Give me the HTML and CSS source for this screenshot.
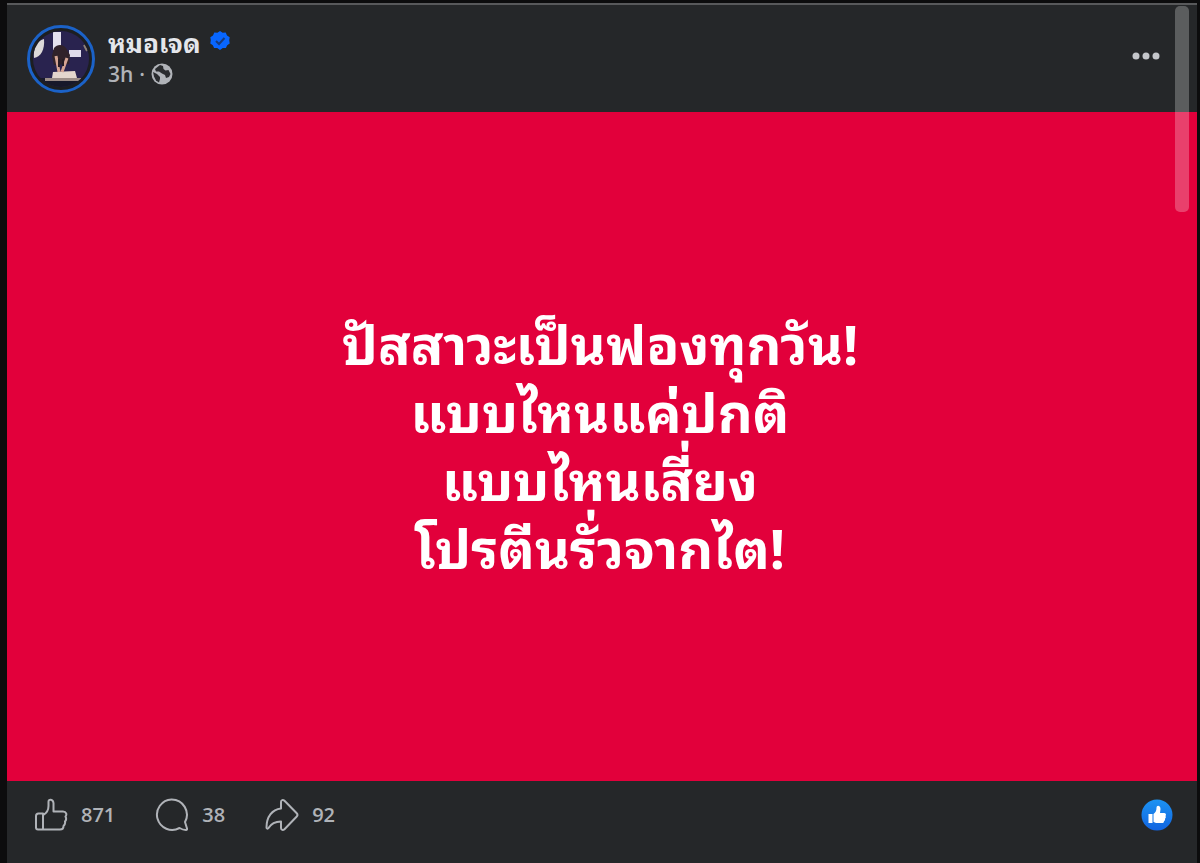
FILE: index.html
```html
<!DOCTYPE html>
<html lang="th">
<head>
  <meta charset="UTF-8" />
  <meta name="viewport" content="width=device-width, initial-scale=1" />
  <title>หมอเจด</title>
  <link rel="stylesheet" href="styles.css">
</head>
<body>
  <article class="post">
    <header class="post-header">
      <a class="avatar" href="#" aria-label="หมอเจด">
        <svg viewBox="0 0 68 68" aria-hidden="true">
          <defs>
            <clipPath id="face"><circle cx="34" cy="34" r="28" /></clipPath>
          </defs>
          <circle cx="34" cy="34" r="32.5" fill="#1c1e22" stroke="#1b62c8" stroke-width="3" />
          <g clip-path="url(#face)">
            <rect width="68" height="68" fill="#29234f" />
            <rect y="53" width="68" height="15" fill="#17182a" />
            <path d="M26 7h8v16l-8 2z" fill="#e4e1ee" />
            <path d="M42 25h12v7H42z" fill="#dedbea" />
            <path d="M17 14c-8 2-11 10-10 19 7-1 11-9 10-19z" fill="#dcd9d8" />
            <path d="M57 20l3 6" stroke="#8f8378" stroke-width="2" />
            <path d="M18 53h36v3H18z" fill="#9b8d87" />
            <path d="M26 47l22-1 2 7H25z" fill="#e3d6cd" />
            <path d="M27 23c3-4 9-4 12 0l4 7-1 9-15 1-2-9z" fill="#30222a" />
            <path d="M29 31l3 16M40 33l-5 14" stroke="#d5a493" stroke-width="3" />
            <path d="M32 34v8M36 34v7" stroke="#271d25" stroke-width="2" />
          </g>
        </svg>
      </a>
      <div class="author">
        <div class="author-line">
          <a class="author-name" href="#">หมอเจด</a>
          <svg class="verified" viewBox="0 0 20 20" aria-hidden="true">
            <path d="M10 0l2.6 1.8 3.1-.2 1.3 2.900 2.700 1.700-.5 3.100.5 3.100-2.500 1.800-1.300 2.900-3.100-.2L10 19l-2.800-2.100-3.100.2-1.300-2.900-2.500-1.800.5-3.100-.5-3.100L3 4.500l1.300-2.900 3.100.2z" fill="#0866ff" />
            <path d="M6 10l3 3 5.500-6" fill="none" stroke="#173a7c" stroke-width="2" />
          </svg>
        </div>
        <div class="meta">
          <a class="time" href="#">3h</a>
          <span>·</span>
          <svg class="globe" viewBox="0 0 22 22" aria-hidden="true">
            <circle cx="11" cy="11" r="10.500" fill="#b0b3b8" />
            <path d="M9 2l3 1 .5 3 2 1.500 3-.5 2 4-1.500 3-3 1-1-3-3-1.500-3-2-3 0-1-2.500z" fill="#292b2e" />
            <path d="M2 9l4 2 3 3 0 2-1 3.500-3-2-2-4z" fill="#292b2e" />
          </svg>
        </div>
      </div>
      <button class="more" type="button" aria-label="More">
        <svg viewBox="0 0 28 8" aria-hidden="true">
          <circle cx="4" cy="4" r="3.500" /><circle cx="14" cy="4" r="3.500" /><circle cx="24" cy="4" r="3.500" />
        </svg>
      </button>
    </header>

    <div class="post-body">
      <p class="message">ปัสสาวะเป็นฟองทุกวัน!<br>แบบไหนแค่ปกติ<br>แบบไหนเสี่ยง<br>โปรตีนรั่วจากไต!</p>
    </div>

    <footer class="post-footer">
      <button class="action" type="button" aria-label="Like 871">
        <svg viewBox="0 0 34 34" aria-hidden="true">
          <path d="M9 15.500H4.500a2.500 2.500 0 0 0-2.500 2.500v11.500a2 2 0 0 0 2 2h5zM9 17c4-2 5.500-5 5.500-9V3.500C14.500 1 19 1 19.500 5v8.500H29c3.500 0 4 3.500 2.500 5 1 2 .5 4-.5 5 .5 2-.5 3.500-1.500 4.500 0 2.500-1.500 3.500-3.500 3.500H9" />
        </svg>
        <span>871</span>
      </button>
      <button class="action" type="button" aria-label="Comment 38">
        <svg viewBox="0 0 34 34" aria-hidden="true">
          <path d="M16.500 1.500a15.200 15.200 0 1 0 8 28.500c2.500 1.500 4.500 2 6.500 2 1 0 1.200-.7 1-1.500l-2-6.500A15.200 15.200 0 0 0 16.500 1.500z" />
        </svg>
        <span>38</span>
      </button>
      <button class="action" type="button" aria-label="Share 92">
        <svg viewBox="0 0 34 34" aria-hidden="true">
          <path d="M16 4c0-2 2-2.500 3.500-1.200L31.500 15c1.300 1.300 1.300 2.500 0 3.800L19.500 31.200C18 32.500 16 32 16 30v-6.500c-6 0-9.500 1.500-12.500 6.500-.8 1.200-2 .7-2-.5C1.500 19 7 11.500 16 10.500z" />
        </svg>
        <span>92</span>
      </button>
      <button class="reactions" type="button" aria-label="Reactions">
        <svg viewBox="0 0 32 32" aria-hidden="true">
          <defs>
            <linearGradient id="like" x1="0" y1="0" x2="0" y2="1">
              <stop offset="0" stop-color="#1c93f2" />
              <stop offset="1" stop-color="#1264e0" />
            </linearGradient>
          </defs>
          <circle cx="16" cy="16" r="15.500" fill="url(#like)" />
          <path d="M7.500 15h4v9h-4zM12.500 15c2-1.500 3-3.500 3-6 0-3.500 4-2.500 4 1l-.5 4h4c2 0 2.500 2 1.500 3 .5 1 .5 2-.5 2.700.3 1.300-.2 2-1 2.500 0 1.300-.8 1.800-2 1.800h-6l-2.500-1z" fill="#fff" />
        </svg>
      </button>
    </footer>
    <div class="scroll-thumb"></div>
  </article>
</body>
</html>
```

FILE: styles.css
```css
* {
  box-sizing: border-box;
}
body {
  margin: 0;
  padding: 3px 3px 0 7px;
  background: #0c0c0d;
  color: #e4e6eb;
  font-family: "Open Sans", "Noto Sans", sans-serif;
}
a {
  color: inherit;
  text-decoration: none;
}
button {
  padding: 0;
  border: none;
  background: none;
  color: inherit;
  font: inherit;
  cursor: pointer;
}
svg {
  display: block;
}
.post {
  position: relative;
  display: flex;
  flex-direction: column;
  min-height: calc(100vh - 3px);
  background: #252729;
  border-top: 2px solid #58595b;
}
.post-header {
  display: flex;
  align-items: center;
  gap: 13px;
  padding: 20px 37px 19px 20px;
}
.avatar svg {
  width: 68px;
  height: 68px;
}
.author {
  flex: 1;
}
.author-line {
  display: flex;
  align-items: center;
  gap: 9px;
  height: 30px;
}
.author-name,
.message {
  font-family: Waree, "Noto Sans Thai Looped", Loma, Tahoma, "Leelawadee UI", "Noto Sans", sans-serif;
  font-weight: 700;
}
.author-name {
  font-size: 26px;
  line-height: 30px;
}
.verified {
  width: 20px;
  height: 20px;
}
.meta {
  display: flex;
  align-items: center;
  gap: 6px;
  height: 36px;
  color: #b0b3b8;
  font-size: 21px;
  font-weight: 600;
}
.globe {
  width: 22px;
  height: 22px;
}
.more {
  padding-bottom: 6px;
}
.more svg {
  width: 28px;
  height: 8px;
  fill: #c4c6ca;
}
.post-body {
  flex: 1;
  display: flex;
  align-items: center;
  justify-content: center;
  padding: 40px 44px 48px 40px;
  background: #e2003b;
}
.message {
  margin: 0;
  color: #fff;
  font-size: 54px;
  line-height: 68px;
  text-align: center;
}
.post-footer {
  display: flex;
  align-items: center;
  gap: 40px;
  padding: 17px 24px 31px 27px;
  color: #b0b3b8;
}
.action {
  display: flex;
  align-items: center;
  gap: 13px;
  font-size: 20px;
  font-weight: 600;
  line-height: 34px;
}
.action svg {
  width: 34px;
  height: 34px;
  fill: none;
  stroke: #b0b3b8;
  stroke-width: 2;
  stroke-linejoin: round;
}
.reactions {
  margin-left: auto;
}
.reactions svg {
  width: 32px;
  height: 32px;
}
.scroll-thumb {
  position: absolute;
  top: 1px;
  right: 8px;
  width: 14px;
  height: 206px;
  border-radius: 5px;
  background: rgba(255, 255, 255, 0.25);
}
```
